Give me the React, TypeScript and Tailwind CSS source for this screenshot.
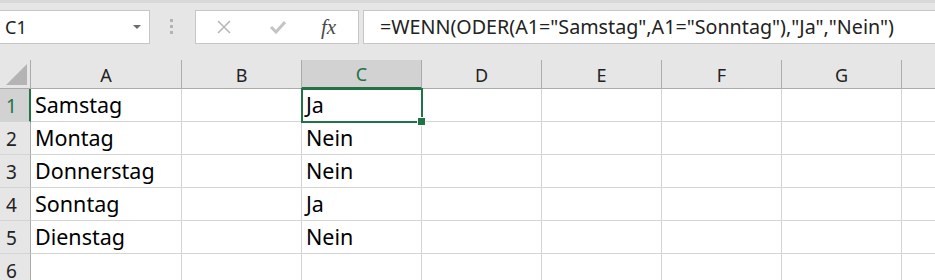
import React from "react";

const cols = ["A", "B", "C", "D", "E", "F", "G", "H"];
const widths: Record<string, string> = {
  A: "w-[151px]",
  B: "w-[120px]",
  C: "w-[120px]",
  D: "w-[120px]",
  E: "w-[120px]",
  F: "w-[120px]",
  G: "w-[120px]",
  H: "w-[120px]",
};

const rows = [
  { a: "Samstag", c: "Ja" },
  { a: "Montag", c: "Nein" },
  { a: "Donnerstag", c: "Nein" },
  { a: "Sonntag", c: "Ja" },
  { a: "Dienstag", c: "Nein" },
  { a: "", c: "" },
];

function Toolbar() {
  return (
    <div className="h-[60px] bg-[#e6e6e6] border-t-[3px] border-[#d9d9d9] pt-[7px] flex items-start">
      {/* Namensfeld */}
      <div className="w-[150px] h-[34px] bg-white border border-l-0 border-[#c6c6c6] flex items-center justify-between pl-[5px] pr-[8px]">
        <span className="text-[18px] text-[#222]">C1</span>
        <svg width="8" height="4" viewBox="0 0 8 4">
          <path d="M0 0 L8 0 L4 4 Z" fill="#6b6b6b" />
        </svg>
      </div>

      {/* Trenner */}
      <div className="ml-[20px] mt-[9px] flex flex-col gap-[3px]">
        <div className="w-[3px] h-[3px] bg-[#b3b3b3]" />
        <div className="w-[3px] h-[3px] bg-[#b3b3b3]" />
        <div className="w-[3px] h-[3px] bg-[#b3b3b3]" />
      </div>

      {/* Abbrechen / Eingeben / Funktion */}
      <div className="ml-[22px] w-[164px] h-[34px] bg-white border border-[#c6c6c6] flex items-center">
        <svg className="ml-[20px]" width="16" height="16" viewBox="0 0 16 16">
          <path d="M2 2 L14 14 M14 2 L2 14" stroke="#b8b8b8" strokeWidth="1.6" fill="none" />
        </svg>
        <svg className="ml-[38px]" width="16" height="14" viewBox="0 0 16 14">
          <path d="M1 7 L6 12 L15 2" stroke="#c4c4c4" strokeWidth="3" fill="none" />
        </svg>
        <span className="ml-[35px] font-['Liberation_Serif',serif] italic text-[21px] text-[#4a4a4a] leading-none">
          fx
        </span>
      </div>

      {/* Bearbeitungsleiste */}
      <div className="ml-[4px] flex-1 h-[34px] bg-white border border-r-0 border-[#c6c6c6] flex items-center pl-[16px]">
        <span className="text-[19.7px] text-[#222] whitespace-nowrap">
          =WENN(ODER(A1="Samstag",A1="Sonntag"),"Ja","Nein")
        </span>
      </div>
    </div>
  );
}

function HeaderRow() {
  return (
    <div className="flex h-[29px] bg-[#e6e6e6]">
      <div className="w-[31px] shrink-0 border-r border-b border-[#ababab] flex items-end justify-end pr-[3px] pb-[3px]">
        <svg width="21" height="21" viewBox="0 0 21 21">
          <path d="M21 0 L21 21 L0 21 Z" fill="#b4b4b4" />
        </svg>
      </div>
      {cols.map((c) => (
        <div
          key={c}
          className={`${widths[c]} shrink-0 border-r flex items-center justify-center pt-[2px] text-[18px] ${
            c === "C"
              ? "bg-[#d2d2d2] text-[#217346] border-[#ababab] border-b-2 border-b-[#217346]"
              : "text-[#222] border-[#ababab] border-b"
          }`}
        >
          {c}
        </div>
      ))}
    </div>
  );
}

export default function App() {
  return (
    <div className="w-[935px] h-[280px] overflow-hidden bg-white font-['Segoe_UI','Noto_Sans',sans-serif]">
      <Toolbar />
      <HeaderRow />
      {rows.map((r, i) => (
        <div key={i} className="flex h-[33px]">
          <div
            className={`w-[31px] shrink-0 border-b border-[#d4d4d4] flex items-center pl-[6px] pt-[2px] text-[19px] ${
              i === 0
                ? "bg-[#d2d2d2] text-[#217346] border-r-2 border-r-[#217346]"
                : "bg-[#e6e6e6] text-[#222] border-r border-r-[#ababab]"
            }`}
          >
            {i + 1}
          </div>
          {cols.map((c) => (
            <div
              key={c}
              className={`${widths[c]} shrink-0 relative border-r border-b border-[#d4d4d4] flex items-center pl-[4px] pt-[1px] text-[21.5px] text-black whitespace-nowrap`}
            >
              {c === "A" ? r.a : c === "C" ? r.c : ""}
              {i === 0 && c === "C" && (
                <div className="absolute z-10 -left-[1px] -top-[1px] w-[122px] h-[35px] border-[2px] border-solid border-[#217346]">
                  <div className="absolute -right-[5px] -bottom-[5px] w-[9px] h-[9px] bg-[#217346] border border-white" />
                </div>
              )}
            </div>
          ))}
        </div>
      ))}
    </div>
  );
}
